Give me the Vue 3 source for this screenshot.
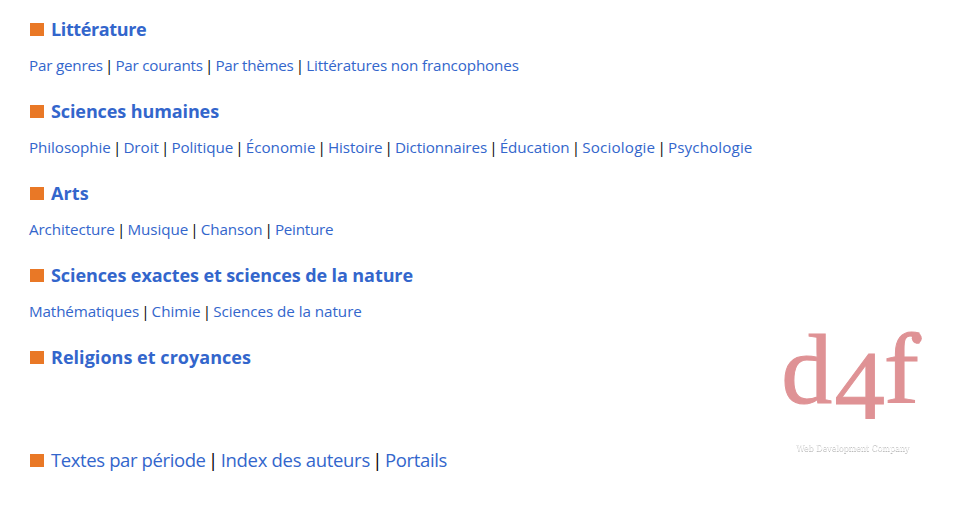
<script setup>
const ctx = document.createElement('canvas').getContext('2d')

function track(text, width, font) {
  ctx.font = font
  return { letterSpacing: ((width - ctx.measureText(text).width) / text.length).toFixed(3) + 'px', width: width + 'px' }
}

const fonts = {
  title: 'bold 18px "Open Sans"',
  link: '15.2px "Open Sans"',
  big: '18.5px "Open Sans"'
}

const sections = [
  { title: ['Littérature', 95.2], links: [['Par genres', 73.8], ['Par courants', 87.4], ['Par thèmes', 78.2], ['Littératures non francophones', 212.6]] },
  { title: ['Sciences humaines', 168], links: [['Philosophie', 81.8], ['Droit', 35.4], ['Politique', 61.8], ['Économie', 69.7], ['Histoire', 54.3], ['Dictionnaires', 92.1], ['Éducation', 70], ['Sociologie', 73.1], ['Psychologie', 84.6]] },
  { title: ['Arts', 37.8], links: [['Architecture', 85.8], ['Musique', 60.8], ['Chanson', 61.6], ['Peinture', 58.2]] },
  { title: ['Sciences exactes et sciences de la nature', 362], links: [['Mathématiques', 110], ['Chimie', 49], ['Sciences de la nature', 148.6]] },
  { title: ['Religions et croyances', 200], links: [] }
]
const indexes = [['Textes par période', 154.6], ['Index des auteurs', 149.2], ['Portails', 62]]
</script>

<template>
  <main class="page">
    <section v-for="s in sections" :key="s.title[0]" class="section">
      <h2 class="title"><i class="square"></i><a :style="track(...s.title, fonts.title)">{{ s.title[0] }}</a></h2>
      <nav v-if="s.links.length" class="links">
        <template v-for="(l, i) in s.links" :key="l[0]">
          <span v-if="i" class="bar">|</span>
          <a :style="track(...l, fonts.link)">{{ l[0] }}</a>
        </template>
      </nav>
    </section>
    <nav class="links indexes">
      <i class="square"></i>
      <template v-for="(l, i) in indexes" :key="l[0]">
        <span v-if="i" class="bar">|</span>
        <a :style="track(...l, fonts.big)">{{ l[0] }}</a>
      </template>
    </nav>
    <svg class="mark" width="190" height="190" viewBox="765 295 190 190">
      <g class="letters">
        <text transform="translate(781.2 402.8) scale(.98 .96)">d</text>
        <text transform="translate(834.4 418.3) scale(.97 .94)">4</text>
        <text transform="translate(883.8 402.6) scale(1.02 .95)">f</text>
      </g>
      <ellipse class="terminal" cx="916.8" cy="338.3" rx="5" ry="5.2" />
      <text class="caption" x="796.5" y="451" textLength="113" lengthAdjust="spacingAndGlyphs">Web Development Company</text>
    </svg>
  </main>
</template>

<style>
body { margin: 0; background: #fff; }
</style>

<style scoped>
.page {
  position: relative;
  box-sizing: border-box;
  height: 506px;
  padding: 16px 0 0 29px;
  overflow: hidden;
  font-family: "Open Sans", "Noto Sans", sans-serif;
  color: #000;
}
.section { margin-bottom: 21px; }
.title {
  display: flex;
  margin: 0;
  font-size: 18px;
  line-height: 26px;
  font-weight: bold;
}
a {
  flex: none;
  color: #36c;
  white-space: nowrap;
}
.square {
  flex: none;
  width: 14px;
  height: 13px;
  margin: 7px 7px 0 1px;
  background: #e97826;
}
.links {
  display: flex;
  margin-top: 11px;
  font-size: 15.2px;
  line-height: 24px;
}
.bar {
  flex: none;
  width: 12.6px;
  text-align: center;
}
.indexes {
  margin-top: 77px;
  font-size: 18.5px;
  line-height: 26px;
}
.indexes .bar { width: 15.1px; }
.mark {
  position: absolute;
  left: 765px;
  top: 295px;
}
.letters {
  font-family: "Liberation Serif", serif;
  font-size: 104px;
  fill: #df9295;
  stroke: #df9295;
  stroke-width: 1px;
}
.terminal { fill: #df9295; }
.caption {
  font-family: "DejaVu Serif", serif;
  font-size: 9px;
  fill: #fff;
  filter: drop-shadow(0 1px .7px rgba(0, 0, 0, .3));
}
</style>
